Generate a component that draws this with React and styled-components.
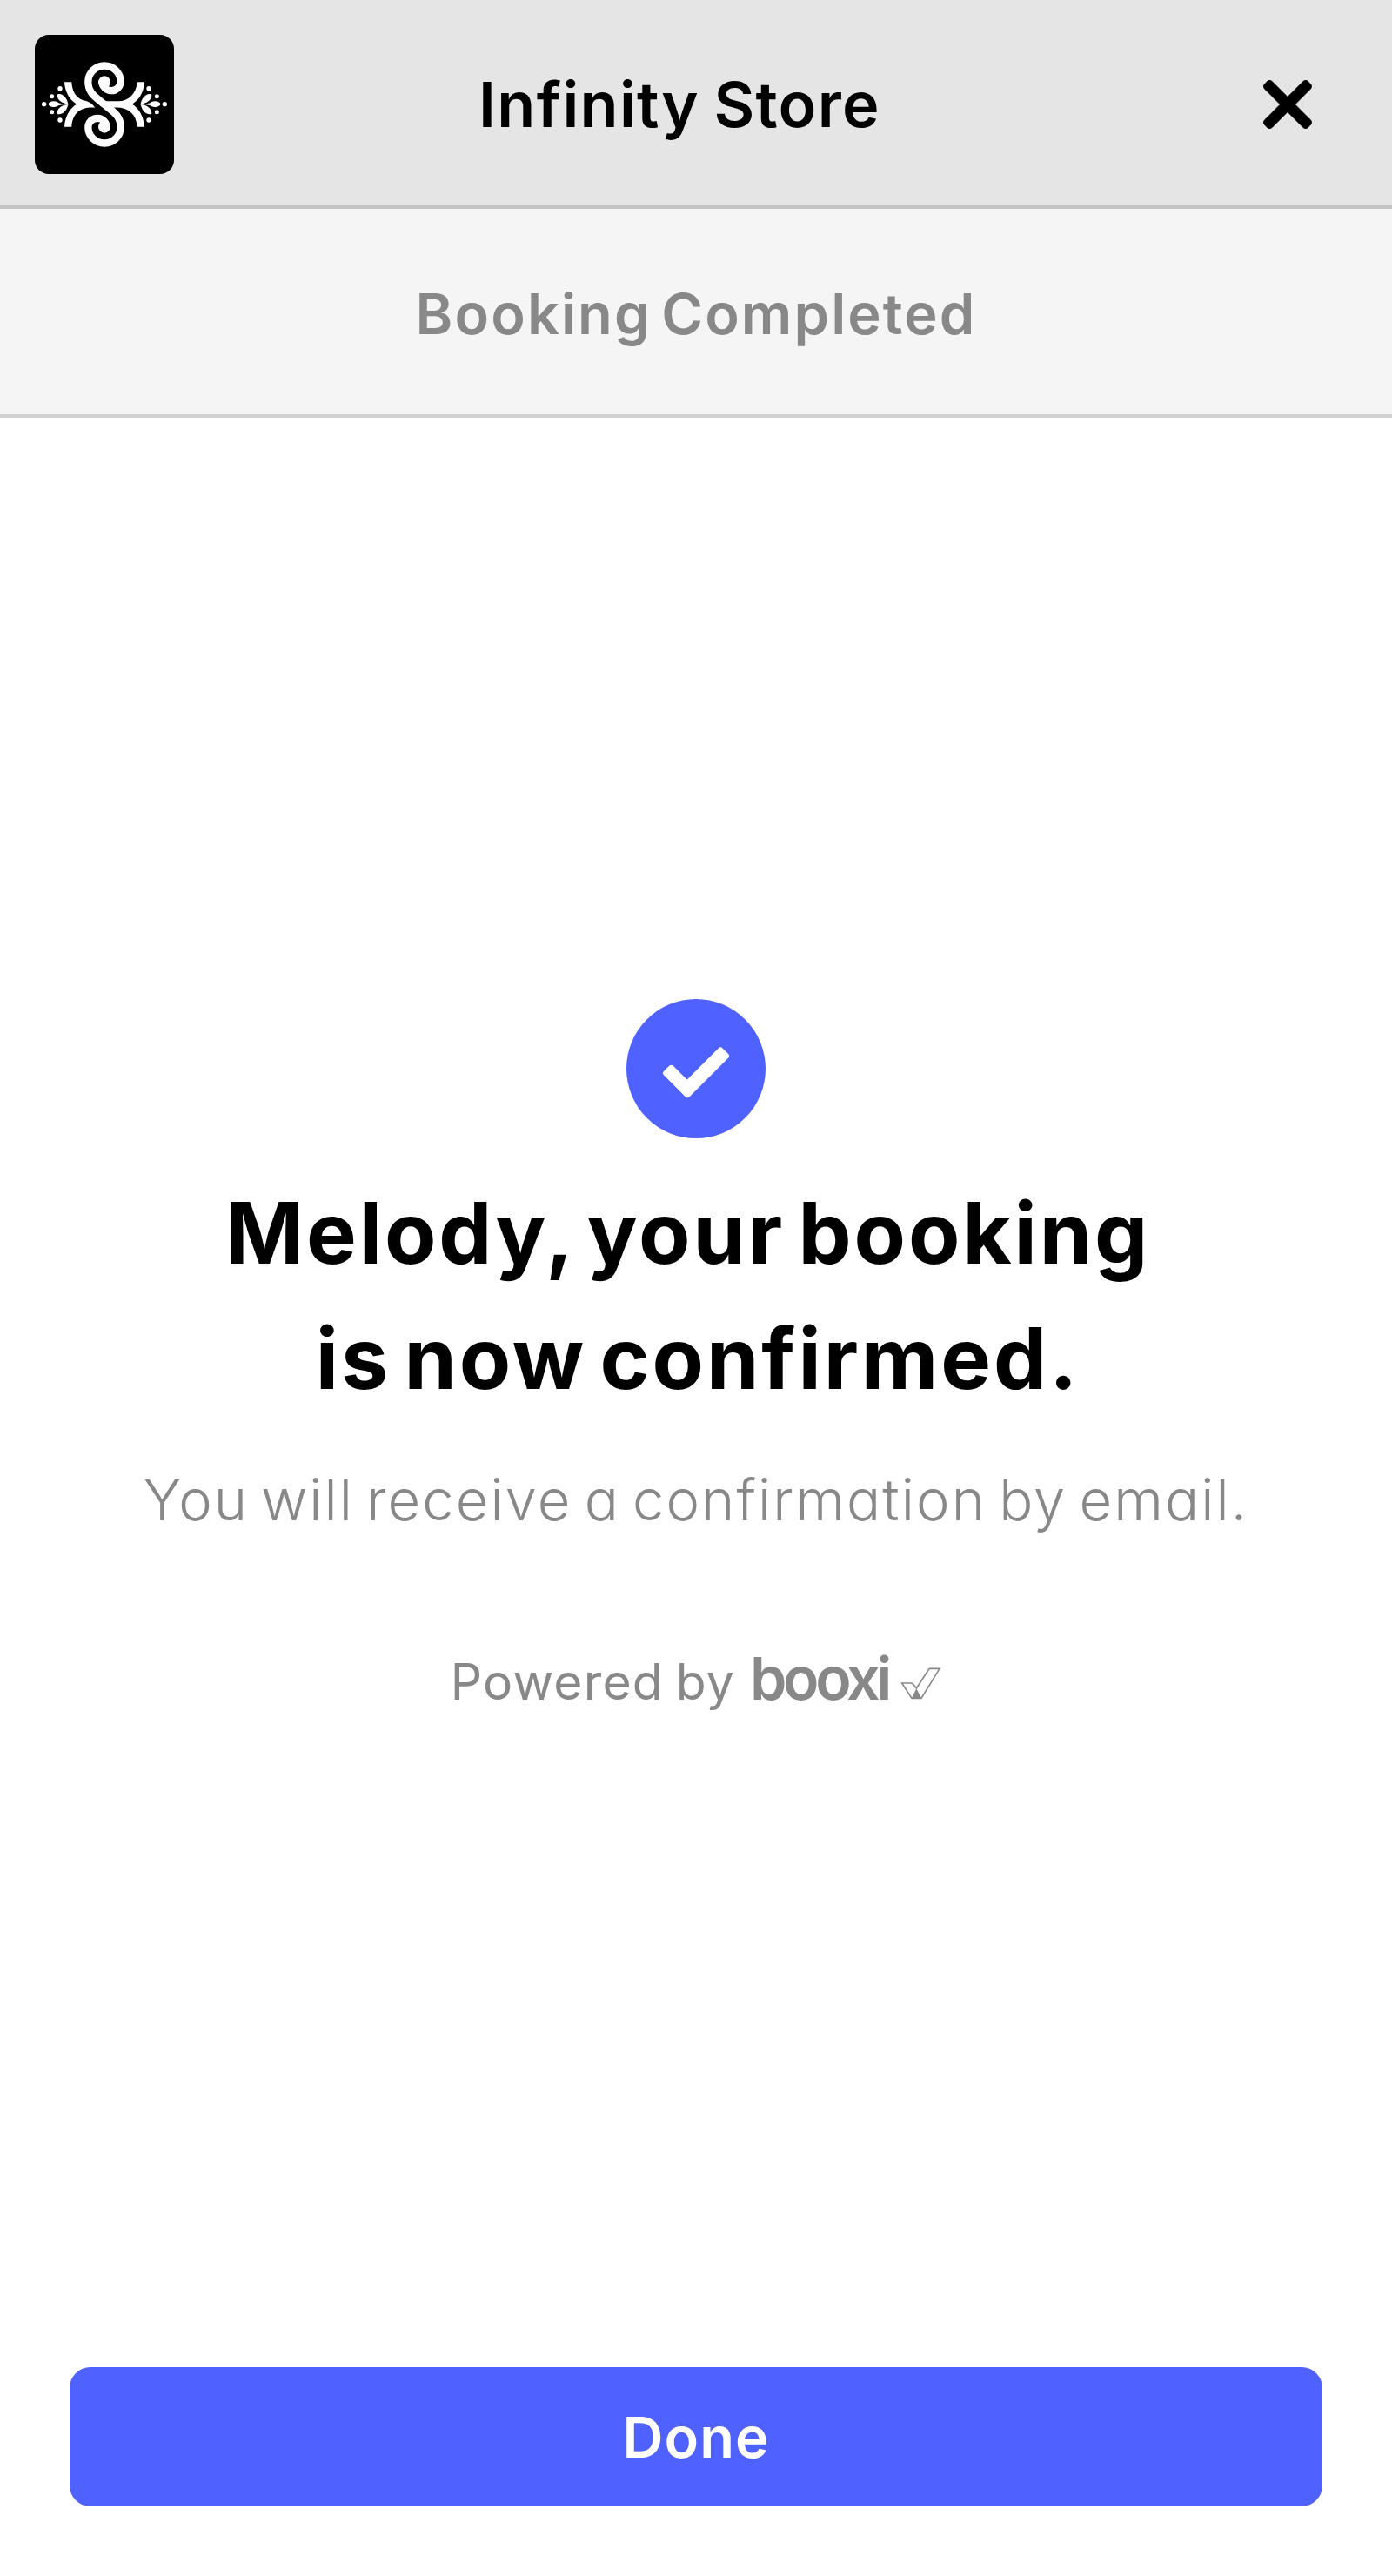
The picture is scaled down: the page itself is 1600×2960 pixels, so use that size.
import React, { useState } from 'react';
import styled, { createGlobalStyle } from 'styled-components';

const curl = 'M262 190A32 32 0 0 0 326 191A56 55 0 1 0 214 192C214 230 238 244 270 270C302 296 326 310 326 348A56 55 0 1 1 214 349A32 32 0 0 1 278 350'

function LogoSide({ flip }) {
    return (
        <g transform={flip ? 'translate(540 0) scale(-1 1)' : undefined}>
            <path d="M145 268C126 267 108 256 107 239Q107 233 113 234C131 235 141 250 145 268Z" />
            <path d="M145 270C126 271 108 282 107 299Q107 305 113 304C131 303 141 288 145 270Z" />
            <path d="M148 269C134 270 116 270 112 274Q106 279 97 279C86 279 77 274 77 269C77 264 86 259 97 259Q106 259 112 264C116 268 134 268 148 269Z" />
            <circle cx="117" cy="215" r="8" />
            <circle cx="89" cy="242" r="7.5" />
            <circle cx="62" cy="269" r="8" />
            <circle cx="89" cy="296" r="7.5" />
            <circle cx="117" cy="324" r="8" />
        </g>
    )
}

function StoreLogo() {
    return (
        <svg width="160" height="160" viewBox="30 30 480 480" fill="#fff">
            <LogoSide />
            <LogoSide flip />
            <path d="M132 193H157C159 230 176 255 208 258C222 263 230 270 238 281C192 277 160 296 157 347H132C134 312 150 284 174 269C150 254 134 228 132 193Z" />
            {/* black edge that parts the left branch from the S */}
            <path d={curl} fill="none" stroke="#000" strokeWidth="43" strokeDasharray="0 310 90 2000" />
            <path d="M408 193H383C380 235 352 259 318 259H270V281H302C348 277 380 300 383 347H408C406 312 390 284 366 269C390 254 406 228 408 193Z" />
            <path d={curl} fill="none" stroke="#fff" strokeWidth="25" />
            <circle cx="270" cy="193" r="21" />
            <circle cx="270" cy="347" r="21" />
        </svg>
    )
}

function CloseIcon() {
    return (
        <svg width="60" height="60" viewBox="-30 -30 60 60">
            <rect x="-35.6" y="-6.4" width="71.2" height="12.8" rx="4.2" transform="rotate(45)" />
            <rect x="-35.6" y="-6.4" width="71.2" height="12.8" rx="4.2" transform="rotate(-45)" />
        </svg>
    )
}

function CheckIcon() {
    return (
        <svg width="160" height="160" viewBox="60 54 480 480">
            <path
                d="M196.500 309.500L214.500 291.500L269 346L384.500 230.500L404 250L270.500 383.500Z"
                fill="#fff"
                stroke="#fff"
                strokeWidth="20"
                strokeLinejoin="round"
            />
        </svg>
    )
}

function BooxiMark() {
    return (
        <svg width="47" height="37" viewBox="42 81 141 111" fill="none" stroke="#888" strokeWidth="4.800">
            <path d="M47 135H76Q84 135 88 141L97 153L140 87Q141 85 144 85H177L114 187H81Z" />
            <path d="M97 154L80 188H115Z" fill="#888" stroke="none" />
        </svg>
    )
}

function App() {
    const [open, setOpen] = useState(true)

    const close = () => setOpen(false)

    if (!open) return null

    return (
        <Screen>
            <GlobalStyle />
            <Header>
                <Logo><StoreLogo /></Logo>
                <StoreName>Infinity Store</StoreName>
                <CloseButton onClick={close} aria-label="Close"><CloseIcon /></CloseButton>
            </Header>
            <StepBar>
                <StepTitle>Booking Completed</StepTitle>
            </StepBar>
            <Content>
                <Badge><CheckIcon /></Badge>
                <Heading>
                    <HeadingLine $end={19}>Melody, your booking</HeadingLine>
                    <HeadingLine $start={4}>is now confirmed.</HeadingLine>
                </Heading>
                <Message>You will receive a confirmation by email.</Message>
                <Powered>
                    <span>Powered by</span>
                    <Brand>booxi</Brand>
                    <BooxiMark />
                </Powered>
            </Content>
            <Footer>
                <DoneButton onClick={close}>Done</DoneButton>
            </Footer>
        </Screen>
    )
}

export default App;

const GlobalStyle = createGlobalStyle`
* {
    box-sizing: border-box;
}
body {
    margin: 0;
    background: #fff;
    font-family: Inter, sans-serif;
    /* single-storey a */
    font-feature-settings: "cv11";
}
svg {
    display: block;
    flex-shrink: 0;
}
button {
    border: 0;
    padding: 0;
    font: inherit;
    cursor: pointer;
}
`

const Screen = styled.div`
display: flex;
flex-direction: column;
min-height: 2960px;
`

const Header = styled.header`
display: flex;
align-items: center;
height: 240px;
padding-left: 40px;
background: #e5e5e5;
box-shadow: inset 0 -4px #c4c4c4;
`

const Logo = styled.div`
width: 160px;
height: 160px;
border-radius: 16px;
background: #000;
overflow: hidden;
`

const StoreName = styled.h1`
flex: 1;
margin: 0;
padding-left: 2px;
text-align: center;
font-size: 72px;
font-weight: 600;
line-height: 96px;
letter-spacing: 1.3px;
word-spacing: -3px;
`

const CloseButton = styled.button`
display: flex;
align-items: center;
justify-content: center;
width: 240px;
height: 160px;
background: none;
`

const StepBar = styled.div`
display: flex;
align-items: center;
justify-content: center;
height: 240px;
padding-top: 2px;
background: #f5f5f5;
box-shadow: inset 0 -4px #d0d0d0;
`

const StepTitle = styled.h2`
margin: 0;
color: #888;
font-size: 65px;
font-weight: 600;
line-height: 96px;
letter-spacing: 2.1px;
word-spacing: -7px;
`

const Content = styled.main`
flex: 1;
display: flex;
flex-direction: column;
align-items: center;
padding-top: 668px;
`

const Badge = styled.div`
width: 160px;
height: 160px;
border-radius: 50%;
background: #4f61ff;
`

const Heading = styled.h3`
margin: 37px 0 0;
text-align: center;
font-size: 97px;
font-weight: 700;
line-height: 144px;
letter-spacing: 2.9px;
word-spacing: -10.5px;
`

const HeadingLine = styled.span`
display: block;
padding: 0 ${({$end}) => $end || 0}px 0 ${({$start}) => $start || 0}px;
`

const Message = styled.p`
margin: 43px 0 0;
color: #888;
font-size: 65px;
font-weight: 300;
line-height: 96px;
letter-spacing: 2.1px;
word-spacing: -6.3px;
`

const Powered = styled.div`
display: flex;
align-items: baseline;
margin-top: 114px;
color: #888;
font-size: 57px;
line-height: 84px;
letter-spacing: 1.2px;
word-spacing: -3.5px;
`

const Brand = styled.span`
margin: 0 14px 0 17px;
font-size: 68px;
font-weight: 600;
letter-spacing: -4.2px;
`

const Footer = styled.footer`
padding: 0 80px 80px;
`

const DoneButton = styled.button`
width: 100%;
height: 160px;
border-radius: 24px;
background: #4f61ff;
color: #fff;
&& {
    padding-top: 1px;
    font-size: 65px;
    font-weight: 600;
    letter-spacing: 1.1px;
}
`
